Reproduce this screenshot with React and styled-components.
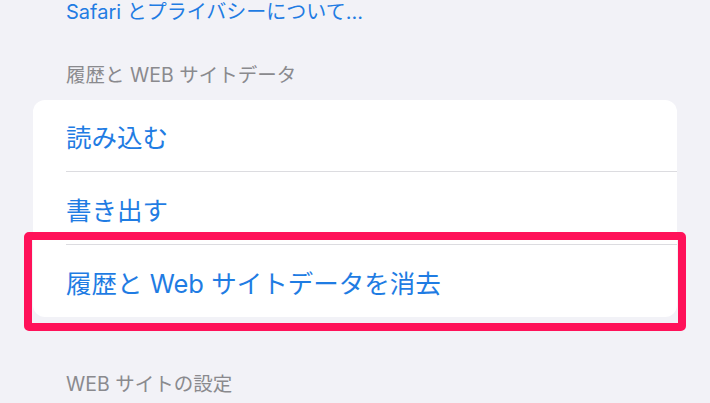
import React from "react";
import styled, { createGlobalStyle } from "styled-components";

const Global = createGlobalStyle`
  html, body { margin: 0; padding: 0; background: #f2f2f7; }
  body { font-family: Inter, "Noto Sans CJK JP", "Noto Sans", sans-serif; -webkit-font-smoothing: antialiased; }
`;

const Page = styled.div`
  position: relative;
  width: 710px;
  height: 403px;
  overflow: hidden;
  background: #f2f2f7;
  padding: 0 33px;
  box-sizing: border-box;
  display: flex;
  flex-direction: column;
`;

const LinkText = styled.div`
  padding-left: 33px;
  font-size: 20px;
  line-height: 24px;
  color: #1f7ce3;
  white-space: nowrap;
`;

const SectionHeader = styled.div`
  padding-left: 33px;
  margin-top: ${(p) => p.$top}px;
  font-size: 19.5px;
  line-height: 22px;
  color: #8a8a8e;
  white-space: nowrap;
`;

const Card = styled.div`
  margin-top: 14px;
  background: #ffffff;
  border-radius: 12px;
  display: flex;
  flex-direction: column;
`;

const Row = styled.div`
  height: ${(p) => p.$h}px;
  padding-left: 33px;
  display: flex;
  align-items: center;
  font-size: 25.5px;
  color: #1f7ce3;
  white-space: nowrap;
`;

const Separator = styled.div`
  height: 1px;
  margin-left: 33px;
  background: #dcdce0;
`;

const Highlight = styled.div`
  position: absolute;
  left: 24px;
  top: 232px;
  width: 662px;
  height: 99px;
  box-sizing: border-box;
  border: 8.5px solid #ff1259;
  border-radius: 5px;
  pointer-events: none;
`;

export default function App() {
  return (
    <>
      <Global />
      <Page>
        <LinkText>Safari とプライバシーについて…</LinkText>
        <SectionHeader $top={40}>履歴と WEB サイトデータ</SectionHeader>
        <Card>
          <Row $h={71}>読み込む</Row>
          <Separator />
          <Row $h={72}>書き出す</Row>
          <Separator />
          <Row $h={72}>履歴と Web サイトデータを消去</Row>
        </Card>
        <SectionHeader $top={56}>WEB サイトの設定</SectionHeader>
        <Highlight />
      </Page>
    </>
  );
}
